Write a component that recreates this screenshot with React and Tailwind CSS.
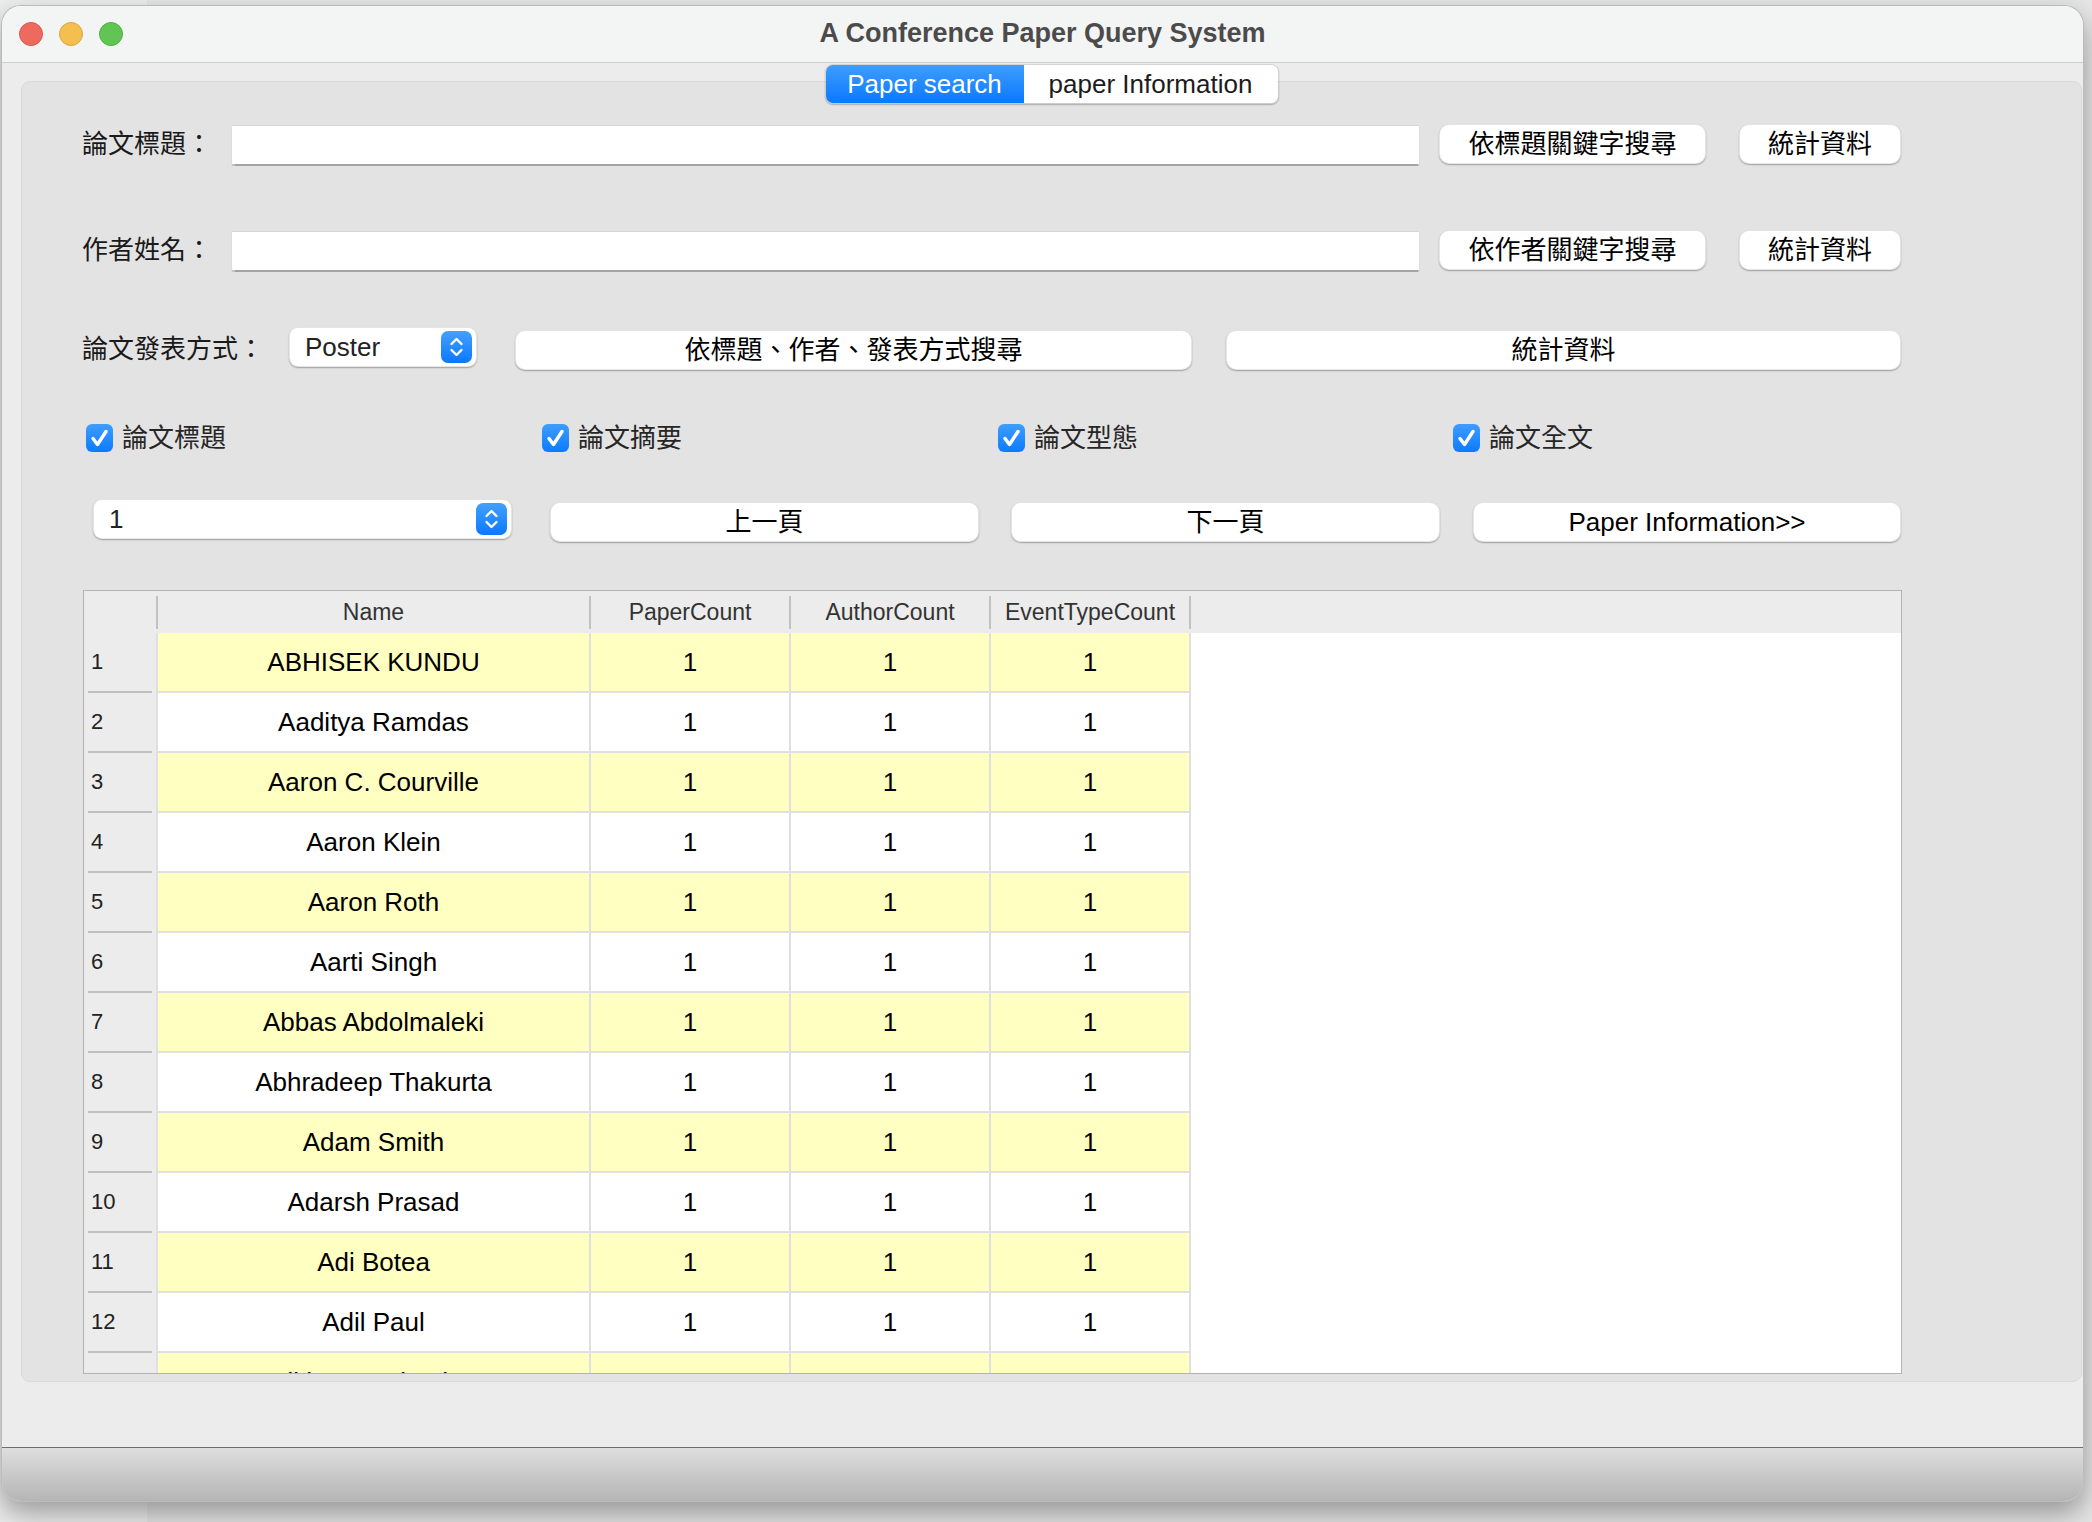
import React from "react";

const names = [
  "ABHISEK KUNDU",
  "Aaditya Ramdas",
  "Aaron C. Courville",
  "Aaron Klein",
  "Aaron Roth",
  "Aarti Singh",
  "Abbas Abdolmaleki",
  "Abhradeep Thakurta",
  "Adam Smith",
  "Adarsh Prasad",
  "Adi Botea",
  "Adil Paul",
  "Adith Swaminathan",
];

function Button({ className = "", children }) {
  return (
    <div
      className={`flex h-[40px] items-center justify-center rounded-[10px] border border-black/10 bg-white text-[26px] leading-none text-black shadow-[0_1px_1.5px_rgba(0,0,0,0.3)] ${className}`}
    >
      {children}
    </div>
  );
}

function Stepper() {
  return (
    <svg width="31" height="32" viewBox="0 0 31 32">
      <defs>
        <linearGradient id="stepg" x1="0" y1="0" x2="0" y2="1">
          <stop offset="0" stopColor="#44a0fd" />
          <stop offset="1" stopColor="#0a79ff" />
        </linearGradient>
      </defs>
      <rect x="0" y="0" width="31" height="32" rx="7" fill="url(#stepg)" />
      <path d="M10.5 13 L15.5 8 L20.5 13" fill="none" stroke="white" strokeWidth="2.4" strokeLinecap="round" strokeLinejoin="round" />
      <path d="M10.5 19 L15.5 24 L20.5 19" fill="none" stroke="white" strokeWidth="2.4" strokeLinecap="round" strokeLinejoin="round" />
    </svg>
  );
}

function Select({ value, className = "" }) {
  return (
    <div
      className={`flex h-[40px] items-center justify-between rounded-[9px] border border-black/10 bg-white pl-[15px] pr-[4px] text-[26px] leading-none text-[#222] shadow-[0_1px_1.5px_rgba(0,0,0,0.3)] ${className}`}
    >
      <span>{value}</span>
      <Stepper />
    </div>
  );
}

function Check({ label, className = "" }) {
  return (
    <div className={`flex items-center gap-[9px] ${className}`}>
      <svg width="27" height="28" viewBox="0 0 27 28">
        <defs>
          <linearGradient id="chkg" x1="0" y1="0" x2="0" y2="1">
            <stop offset="0" stopColor="#3f9dff" />
            <stop offset="1" stopColor="#0b7bff" />
          </linearGradient>
        </defs>
        <rect x="0" y="0" width="27" height="28" rx="6" fill="url(#chkg)" />
        <path d="M7 14.5 L11.5 20.5 L20 7.5" fill="none" stroke="white" strokeWidth="3.4" strokeLinecap="round" strokeLinejoin="round" />
      </svg>
      <span className="text-[26px] leading-none text-[#262626]">{label}</span>
    </div>
  );
}

function TextField({ className = "" }) {
  return (
    <div
      className={`h-[39px] border-t border-[#d6d6d6] bg-white shadow-[0_1.5px_1px_rgba(0,0,0,0.28)] ${className}`}
    />
  );
}

function PaperTable() {
  return (
    <div className="mt-[48px] ml-[61px] h-[784px] w-[1819px] overflow-hidden border border-[#b3b3b3] bg-white">
      {/* header */}
      <div className="flex h-[42px] items-center bg-[#ececec] text-[23px] leading-none text-[#333]">
        <div className="w-[72px]" />
        <div className="h-[33px] w-[2px] bg-[#c2c2c2]" />
        <div className="w-[431px] text-center">Name</div>
        <div className="h-[33px] w-[2px] bg-[#c2c2c2]" />
        <div className="w-[198px] text-center">PaperCount</div>
        <div className="h-[33px] w-[2px] bg-[#c2c2c2]" />
        <div className="w-[198px] text-center">AuthorCount</div>
        <div className="h-[33px] w-[2px] bg-[#c2c2c2]" />
        <div className="w-[198px] text-center">EventTypeCount</div>
        <div className="h-[33px] w-[2px] bg-[#c2c2c2]" />
      </div>
      {names.map((name, i) => {
        const bg = i % 2 === 0 ? "bg-[#ffffc2]" : "bg-white";
        return (
          <div key={name} className="flex h-[60px]">
            <div className="flex w-[72px] flex-col bg-[#ececec]">
              <div className="flex flex-1 items-center pl-[7px] text-[22px] leading-none text-[#222]">
                {i + 1}
              </div>
              <div className="mx-[4px] h-[2px] bg-[#bfbfbf]" />
            </div>
            <div className="w-[2px] bg-[#e0e0e0]" />
            <div className={`flex w-[433px] items-center justify-center border-r-2 border-b-2 border-[#e0e0e0] text-[26px] leading-none text-black ${bg}`}>
              {name}
            </div>
            {[0, 1, 2].map((c) => (
              <div
                key={c}
                className={`flex w-[200px] items-center justify-center border-r-2 border-b-2 border-[#e0e0e0] text-[26px] leading-none text-black ${bg}`}
              >
                1
              </div>
            ))}
          </div>
        );
      })}
    </div>
  );
}

export default function App() {
  return (
    <div className="h-[1522px] w-[2092px] overflow-hidden bg-[linear-gradient(to_right,#eeeeee_147px,#e6e6e6_147px)] pt-[5px] pl-[1px] font-['Liberation_Sans','Noto_Sans_CJK_TC',sans-serif]">
      <div className="flex h-[1497px] w-[2083px] flex-col overflow-hidden rounded-[20px] border border-black/20 bg-[#ececec] shadow-[0_12px_28px_rgba(0,0,0,0.35)]">
        {/* title bar */}
        <div className="grid h-[57px] shrink-0 grid-cols-[1fr_auto_1fr] items-center border-b border-[#cfcfcf] bg-[#f3f4f4]">
          <div className="flex items-center gap-[16px] pl-[17px]">
            <span className="h-[24px] w-[24px] rounded-full border border-[#d9574b] bg-[#ef6a5e]" />
            <span className="h-[24px] w-[24px] rounded-full border border-[#d9a540] bg-[#f5bf4f]" />
            <span className="h-[24px] w-[24px] rounded-full border border-[#4fae43] bg-[#61c554]" />
          </div>
          <div className="-mt-[2px] text-[27px] font-bold leading-none text-[#4b4b4b]">
            A Conference Paper Query System
          </div>
          <div />
        </div>

        {/* content */}
        <div className="flex-1 pt-[18px] pl-[19px] pr-[1px]">
          <div className="flex h-[1301px] flex-col rounded-[9px] border border-[#d9d9d9] bg-[#e3e3e3]">
            {/* tabs */}
            <div className="-mt-[18px] flex h-[40px] self-center overflow-hidden rounded-[8px] border border-black/10 text-[26px] leading-none shadow-[0_1px_1.5px_rgba(0,0,0,0.25)]">
              <div className="flex w-[198px] items-center justify-center bg-[linear-gradient(#3f9dfd,#0a79ff)] text-white">
                Paper search
              </div>
              <div className="flex w-[254px] items-center justify-center bg-white text-[#1c1c1c]">
                paper Information
              </div>
            </div>

            {/* row 1 */}
            <div className="mt-[20px] flex h-[40px] items-center pl-[60px]">
              <div className="w-[150px] text-[26px] leading-none text-[#1a1a1a]">論文標題：</div>
              <TextField className="w-[1187px]" />
              <Button className="ml-[20px] w-[267px]">依標題關鍵字搜尋</Button>
              <Button className="ml-[33px] w-[162px]">統計資料</Button>
            </div>

            {/* row 2 */}
            <div className="mt-[66px] flex h-[40px] items-center pl-[60px]">
              <div className="w-[150px] text-[26px] leading-none text-[#1a1a1a]">作者姓名：</div>
              <TextField className="w-[1187px]" />
              <Button className="ml-[20px] w-[267px]">依作者關鍵字搜尋</Button>
              <Button className="ml-[33px] w-[162px]">統計資料</Button>
            </div>

            {/* row 3 */}
            <div className="mt-[57px] flex h-[43px] items-center pl-[60px]">
              <div className="w-[207px] text-[26px] leading-none text-[#1a1a1a]">論文發表方式：</div>
              <Select value="Poster" className="w-[188px] self-start" />
              <Button className="ml-[38px] w-[677px] self-end">依標題、作者、發表方式搜尋</Button>
              <Button className="ml-[34px] w-[675px] self-end">統計資料</Button>
            </div>

            {/* row 4 */}
            <div className="mt-[54px] flex h-[28px] items-center pl-[64px]">
              <Check label="論文標題" className="w-[456px]" />
              <Check label="論文摘要" className="w-[456px]" />
              <Check label="論文型態" className="w-[455px]" />
              <Check label="論文全文" />
            </div>

            {/* row 5 */}
            <div className="mt-[47px] flex h-[43px] items-center pl-[71px]">
              <Select value="1" className="w-[419px] self-start" />
              <Button className="ml-[38px] w-[429px] self-end">上一頁</Button>
              <Button className="ml-[32px] w-[429px] self-end">下一頁</Button>
              <Button className="ml-[33px] w-[428px] self-end">Paper Information&gt;&gt;</Button>
            </div>

            <PaperTable />
          </div>
        </div>

        {/* bottom bar */}
        <div className="h-[54px] shrink-0 border-t border-[#6d6d6d] bg-[linear-gradient(#dedede,#b5b5b5)]" />
      </div>
    </div>
  );
}
